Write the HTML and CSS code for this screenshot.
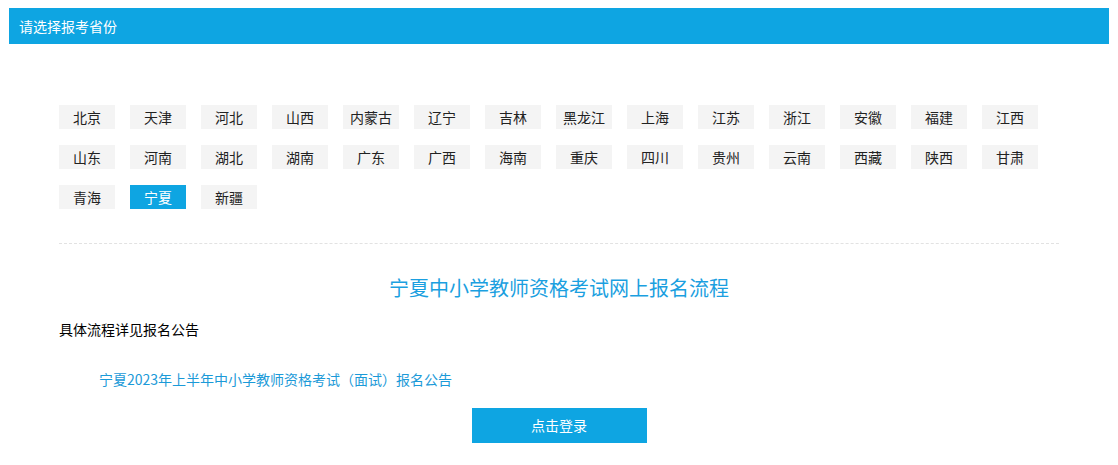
FILE: index.html
```html
<!DOCTYPE html>
<html lang="zh-CN">

<head>
    <meta charset="UTF-8">
    <title>请选择报考省份</title>
    <link rel="stylesheet" href="styles.css">
</head>

<body>
    <div class="wrap">
        <div class="hd">请选择报考省份</div>
        <div class="box">
            <ul class="prov">
                <li>北京</li>
                <li>天津</li>
                <li>河北</li>
                <li>山西</li>
                <li>内蒙古</li>
                <li>辽宁</li>
                <li>吉林</li>
                <li>黑龙江</li>
                <li>上海</li>
                <li>江苏</li>
                <li>浙江</li>
                <li>安徽</li>
                <li>福建</li>
                <li>江西</li>
                <li>山东</li>
                <li>河南</li>
                <li>湖北</li>
                <li>湖南</li>
                <li>广东</li>
                <li>广西</li>
                <li>海南</li>
                <li>重庆</li>
                <li>四川</li>
                <li>贵州</li>
                <li>云南</li>
                <li>西藏</li>
                <li>陕西</li>
                <li>甘肃</li>
                <li>青海</li>
                <li class="on">宁夏</li>
                <li>新疆</li>
            </ul>
            <div class="line"></div>
            <h2 class="title">宁夏中小学教师资格考试网上报名流程</h2>
            <p class="tip">具体流程详见报名公告</p>
            <p class="notice"><a href="#">宁夏2023年上半年中小学教师资格考试（面试）报名公告</a></p>
            <div class="btn-row">
                <a class="btn" href="#">点击登录</a>
            </div>
        </div>
    </div>
</body>

</html>
```

FILE: styles.css
```css
* {
    padding: 0;
    margin: 0;
    list-style: none;
}

body {
    margin: 8px;
    font-family: "Microsoft YaHei", "Noto Sans CJK SC", sans-serif;
    font-size: 14px;
    color: #000;
    background: #fff;
}

a {
    text-decoration: none;
}

.wrap {
    width: 1100px;
    margin: 0 auto;
}

.hd {
    height: 36px;
    line-height: 36px;
    padding-left: 10px;
    background: #0ea5e2;
    color: #fff;
    font-size: 14px;
}

.box {
    padding: 61px 50px 0;
}

.prov {
    display: flex;
    flex-wrap: wrap;
    gap: 16px 15px;
}

.prov li {
    width: 56px;
    height: 24px;
    line-height: 24px;
    text-align: center;
    background: #f4f4f4;
    color: #222;
    cursor: pointer;
}

.prov li.on {
    background: #0ea5e2;
    color: #fff;
}

.line {
    margin-top: 34px;
    border-top: 1px dashed #e2e2e2;
}

.title {
    margin-top: 29px;
    height: 30px;
    line-height: 30px;
    text-align: center;
    font-size: 20px;
    font-weight: normal;
    color: #1b9fe0;
}

.tip {
    margin-top: 16px;
    line-height: 20px;
}

.notice {
    margin-top: 30px;
    padding-left: 40px;
    line-height: 20px;
}

.notice a {
    color: #1b9ad8;
}

.btn-row {
    margin-top: 19px;
    display: flex;
    justify-content: center;
}

.btn {
    display: block;
    width: 175px;
    height: 35px;
    line-height: 35px;
    text-align: center;
    background: #0ea5e2;
    color: #fff;
}
```
